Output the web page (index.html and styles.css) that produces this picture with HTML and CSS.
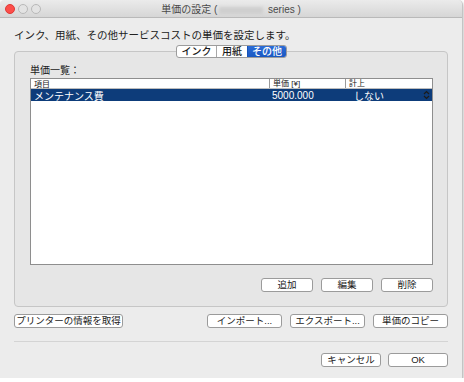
FILE: index.html
```html
<!DOCTYPE html>
<html lang="ja">
<head>
  <meta charset="UTF-8" />
  <title>単価の設定</title>
  <link rel="stylesheet" href="styles.css">
</head>
<body>
  <div class="window">
    <div class="titlebar">
      <div class="lights">
        <span class="light red"></span>
        <span class="light"></span>
        <span class="light"></span>
      </div>
      <div class="title">単価の設定 (<span class="blur"></span> series )</div>
    </div>

    <div class="content">
      <p class="intro">インク、用紙、その他サービスコストの単価を設定します。</p>

      <div class="group">
        <div class="tabs">
          <span class="tab">インク</span>
          <span class="tab">用紙</span>
          <span class="tab selected">その他</span>
        </div>

        <div class="label">単価一覧：</div>

        <div class="table">
          <div class="row head">
            <span class="c1">項目</span>
            <span class="c2">単価 [¥]</span>
            <span class="c3">計上</span>
          </div>
          <div class="row sel">
            <span class="c1">メンテナンス費</span>
            <span class="c2">5000.000</span>
            <span class="c3">しない</span>
            <span class="updown">
              <svg width="7" height="10" viewBox="0 0 7 10"><path d="M1 4 L3.5 1.5 L6 4 M1 6 L3.5 8.5 L6 6" fill="none" stroke="#1b1b1b" stroke-width="1.2"/></svg>
            </span>
          </div>
        </div>

        <div class="btnrow">
          <button class="btn w52">追加</button>
          <button class="btn w52">編集</button>
          <button class="btn w52">削除</button>
        </div>
      </div>

      <div class="actions">
        <button class="btn w109">プリンターの情報を取得</button>
        <span class="spacer"></span>
        <button class="btn w75">インポート...</button>
        <button class="btn w75">エクスポート...</button>
        <button class="btn w75">単価のコピー</button>
      </div>

      <hr class="sep">

      <div class="footer">
        <button class="btn w60">キャンセル</button>
        <button class="btn w60">OK</button>
      </div>
    </div>
  </div>
</body>
</html>
```

FILE: styles.css
```css
*, *::before, *::after {
  box-sizing: border-box;
}
body {
  margin: 0;
  background: #ffffff;
  font-family: "Liberation Sans", "Noto Sans CJK JP", sans-serif;
  font-size: 10px;
  color: #1a1a1a;
}

.window {
  width: 463px;
  height: 378px;
  background: #ececec;
  border-radius: 5px 5px 0 0;
  border-right: 1px solid #c4c4c4;
  box-shadow: 0 2px 4px rgba(0, 0, 0, 0.35);
  overflow: hidden;
}

/* Title bar */
.titlebar {
  height: 18px;
  display: flex;
  align-items: center;
  background: linear-gradient(#ebebeb, #d6d6d6);
  border-bottom: 1px solid #b9b9b9;
}
.lights {
  display: flex;
  gap: 3px;
  padding-left: 5px;
  width: 60px;
}
.light {
  width: 10px;
  height: 10px;
  border-radius: 50%;
  background: #e3e3e3;
  border: 1px solid #b8b8b8;
}
.light.red {
  background: #fc4e4a;
  border-color: #de3a36;
}
.title {
  flex: 1;
  text-align: center;
  padding-right: 60px;
  font-size: 10px;
  color: #4a4a4a;
}
.blur {
  display: inline-block;
  width: 44px;
  height: 7px;
  margin: 0 2px;
  vertical-align: middle;
  background: #cfcfcf;
  filter: blur(1.5px);
}

/* Content */
.content {
  padding: 0 14px;
}
.intro {
  margin: 0;
  padding-top: 11px;
  height: 33px;
  line-height: 12px;
  font-size: 10.5px;
  color: #222;
}

.group {
  background: #e6e6e6;
  border: 1px solid #c6c6c6;
  border-radius: 4px;
  padding: 0 14px 14px 15px;
  height: 256px;
}
.tabs {
  display: flex;
  width: 111px;
  margin: -7px auto 0;
  height: 13px;
  border: 1px solid #9c9c9c;
  border-radius: 3px;
  background: #fff;
  overflow: hidden;
}
.tab {
  flex: 1;
  text-align: center;
  line-height: 11px;
  font-size: 10px;
  font-weight: 500;
  border-left: 1px solid #a8a8a8;
}
.tab:first-child {
  border-left: none;
  flex: 0 0 39px;
}
.tab:nth-child(2) {
  flex: 0 0 31px;
}
.tab.selected {
  background: linear-gradient(#2c6cd6, #1a58c2);
  color: #fff;
  border-left-color: #1654b8;
}

.label {
  margin-top: 6px;
  height: 14px;
  line-height: 14px;
  font-size: 10px;
}

.table {
  height: 187px;
  background: #fff;
  border: 1px solid #8e8e8e;
}
.row {
  display: flex;
  align-items: center;
}
.row.head {
  height: 10px;
  font-size: 8px;
  border-bottom: 1px solid #bdbdbd;
}
.row.head span {
  padding-left: 3px;
}
.row.head .c2,
.row.head .c3 {
  border-left: 1px solid #9a9a9a;
  line-height: 9px;
}
.row.sel {
  height: 12px;
  background: #0d3c7a;
  color: #fff;
  font-size: 10px;
}
.c1 {
  width: 238px;
  padding-left: 3px;
}
.c2 {
  width: 76px;
}
.row.sel .c2 {
  padding-left: 3px;
}
.c3 {
  flex: 1;
}
.row.sel .c3 {
  padding-left: 9px;
}
.updown {
  display: flex;
  width: 9px;
  height: 10px;
}

.btnrow {
  display: flex;
  justify-content: flex-end;
  gap: 8px;
  margin-top: 13px;
}

.btn {
  height: 14px;
  padding: 0;
  font-family: inherit;
  font-size: 9.5px;
  line-height: 12px;
  color: #1a1a1a;
  background: #fff;
  border: 1px solid #9b9b9b;
  border-radius: 3px;
}
.w52 { width: 52px; }
.w60 { width: 60px; }
.w75 { width: 75px; }
.w109 { width: 109px; }

.actions {
  display: flex;
  gap: 8px;
  margin-top: 7px;
}
.spacer {
  flex: 1;
}

.sep {
  margin: 13px 0 0;
  border: none;
  border-top: 1px solid #d4d4d4;
}

.footer {
  display: flex;
  justify-content: flex-end;
  gap: 7px;
  margin-top: 11px;
}
```
